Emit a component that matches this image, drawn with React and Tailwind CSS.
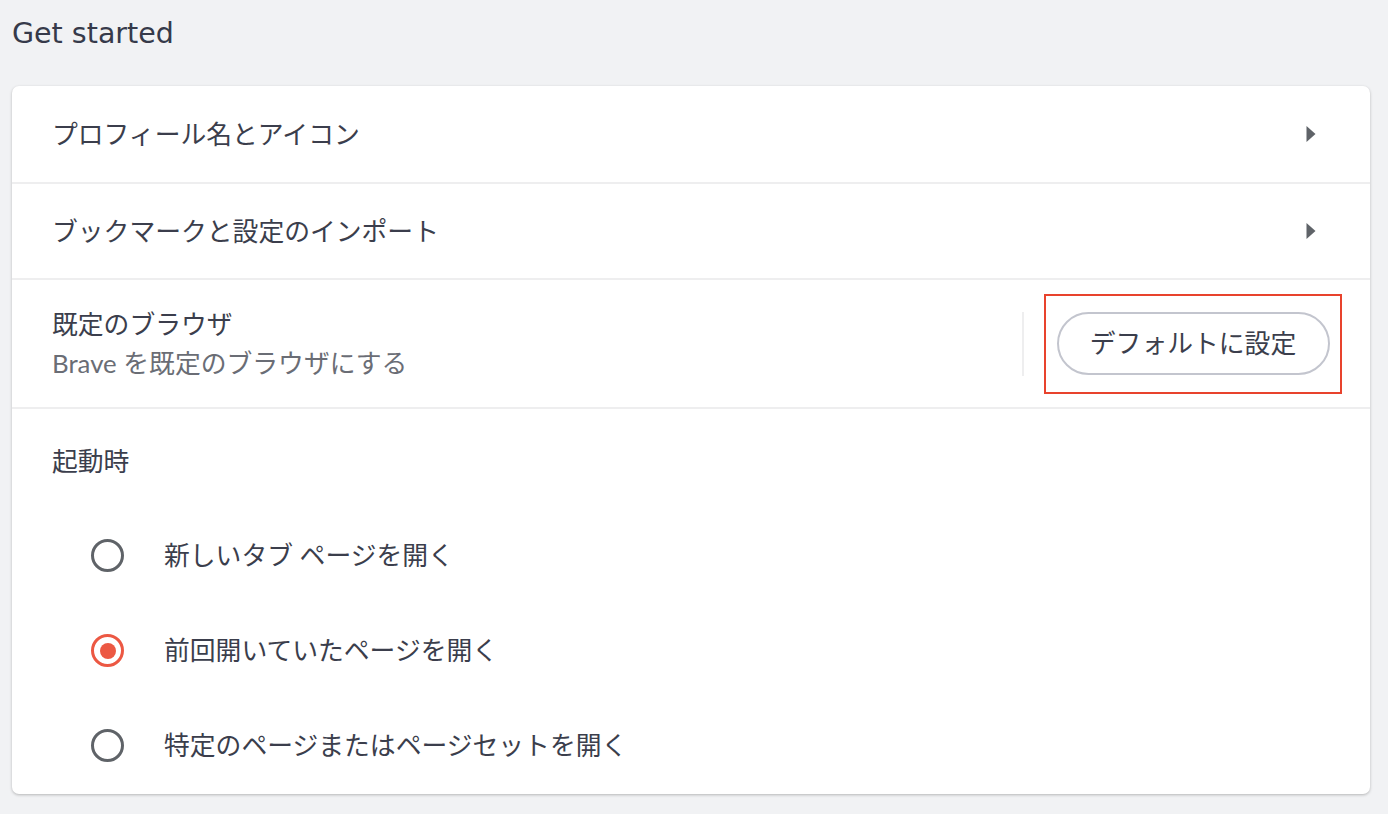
import React from 'react'

const jp = { fontFamily: '"Lato", "Noto Sans CJK JP", sans-serif' }

const Arrow = () => (
  <svg width="10" height="16" viewBox="0 0 10 16" className="shrink-0">
    <path d="M0.5 0 L9.5 8 L0.5 16 Z" fill="#5f6368" />
  </svg>
)

const Radio = ({ checked, label }) => (
  <div className="flex items-center h-[95px] pl-[79px]">
    <span
      className={
        'w-[33px] h-[33px] rounded-full border-[3.5px] flex items-center justify-center shrink-0 ' +
        (checked ? 'border-[#ec5843]' : 'border-[#5f6368]')
      }
    >
      {checked && <span className="w-[16px] h-[16px] rounded-full bg-[#ec5843]" />}
    </span>
    <span className="ml-[40px] text-[25.8px] text-[#3b3e4c]">{label}</span>
  </div>
)

const App = () => {
  return (
    <div className="min-h-screen bg-[#f1f2f4] px-[12px] pt-[15px] pb-[20px]" style={jp}>
      <h2
        className="text-[28.5px] text-[#363a4a] leading-[38px] mb-[33px]"
        style={{ fontFamily: '"DejaVu Sans", sans-serif' }}
      >
        Get started
      </h2>

      <div className="bg-white rounded-[7px] shadow-[0_1px_3px_rgba(0,0,0,0.25)] w-[1358px] overflow-hidden">
        <div className="h-[98px] border-b-2 border-[#eeeeef] flex items-center justify-between pl-[40px] pr-[54px]">
          <span className="text-[25.8px] text-[#3b3e4c]">プロフィール名とアイコン</span>
          <Arrow />
        </div>

        <div className="h-[96px] border-b-2 border-[#eeeeef] flex items-center justify-between pl-[40px] pr-[54px]">
          <span className="text-[25.8px] text-[#3b3e4c]">ブックマークと設定のインポート</span>
          <Arrow />
        </div>

        <div className="h-[129px] border-b-2 border-[#eeeeef] flex items-center justify-between pl-[40px] pr-[28px]">
          <div className="flex flex-col">
            <span className="text-[25.8px] text-[#3b3e4c] leading-[38px]">既定のブラウザ</span>
            <span className="text-[25.8px] text-[#6a6d75] leading-[40px]">Brave を既定のブラウザにする</span>
          </div>
          <div className="flex items-center">
            <div className="w-[2px] h-[64px] bg-[#eeeeef] mr-[20px]" />
            <div className="border-2 border-[#e8432d] w-[298px] h-[100px] flex items-center justify-center">
              <button className="w-[273px] h-[63px] rounded-full border-2 border-[#c3c5ce] text-[25.8px] text-[#3b3e4c] bg-white">
                デフォルトに設定
              </button>
            </div>
          </div>
        </div>

        <div className="pt-[33px] pb-[1px]">
          <div className="pl-[40px] text-[25.8px] text-[#3b3e4c] leading-[38px] mb-[28px]">起動時</div>
          <Radio label="新しいタブ ページを開く" />
          <Radio checked label="前回開いていたページを開く" />
          <Radio label="特定のページまたはページセットを開く" />
        </div>
      </div>
    </div>
  )
}

export default App
